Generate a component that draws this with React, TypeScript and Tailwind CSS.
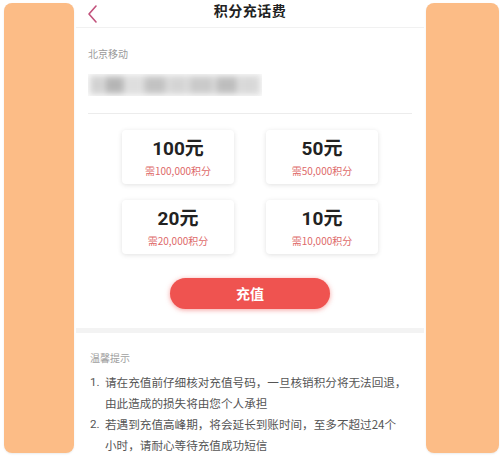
const options = [
  { amount: "100元", cost: "需100,000积分" },
  { amount: "50元", cost: "需50,000积分" },
  { amount: "20元", cost: "需20,000积分" },
  { amount: "10元", cost: "需10,000积分" },
];

export default function App() {
  return (
    <div
      className="flex h-[456px] w-[500px] overflow-hidden bg-white"
      style={{ fontFamily: '"Noto Sans CJK SC", "Noto Sans", sans-serif' }}
    >
      {/* left side panel */}
      <div className="ml-[4px] mt-[3px] h-[450px] w-[70px] rounded-lg bg-[#fcbc86] shadow-[0_1px_2px_rgba(0,0,0,0.08)]" />

      {/* phone screen */}
      <div className="ml-[2px] flex w-[348px] flex-col bg-white">
        {/* header */}
        <div className="relative flex h-[33px] items-center justify-center border-b border-[#f1f1f1]">
          <svg
            className="absolute left-[10px] top-[4px]"
            width="12"
            height="20"
            viewBox="0 0 12 20"
            fill="none"
          >
            <path d="M10 2 L3 10 L10 18" stroke="#c2527c" strokeWidth="1.6" strokeLinecap="round" strokeLinejoin="round" />
          </svg>
          <h1 className="mb-[6px] text-[14px] font-bold tracking-[0.5px] text-[#222]">积分充话费</h1>
        </div>

        {/* account */}
        <div className="px-[12px]">
          <div className="pt-[19px] text-[10px] leading-[14px] text-[#9a9a9a]">北京移动</div>
          <div className="mt-[13px] h-[22px] w-[174px] overflow-hidden">
            <div className="flex h-full items-center gap-[3px] bg-[#e6e6e6] px-[4px] blur-[3px]">
              <div className="h-[16px] w-[10px] bg-[#cfcfcf]" />
              <div className="h-[16px] w-[20px] bg-[#b5b5b5]" />
              <div className="h-[16px] w-[14px] bg-[#dedede]" />
              <div className="h-[16px] w-[22px] bg-[#c2c2c2]" />
              <div className="h-[16px] w-[18px] bg-[#d4d4d4]" />
              <div className="h-[16px] w-[24px] bg-[#cacaca]" />
              <div className="h-[16px] w-[22px] bg-[#bdbdbd]" />
              <div className="h-[16px] w-[18px] bg-[#d8d8d8]" />
            </div>
          </div>
          <div className="mt-[17px] border-b border-[#ececec]" />
        </div>

        {/* options */}
        <div className="mt-[16px] grid grid-cols-[112px_112px] justify-center gap-x-[32px] gap-y-[16px]">
          {options.map((o) => (
            <div
              key={o.amount}
              className="flex h-[54px] flex-col items-center justify-center rounded-[4px] bg-white shadow-[0_1px_5px_rgba(0,0,0,0.12)]"
            >
              <div
                className="text-[19px] font-bold leading-[24px] text-[#222]"
                style={{ fontFamily: 'Roboto, "Noto Sans CJK SC", sans-serif' }}
              >
                {o.amount}
              </div>
              <div className="mt-[3px] text-[10px] leading-[13px] text-[#de6a6a]">{o.cost}</div>
            </div>
          ))}
        </div>

        {/* submit */}
        <div className="mt-[24px] flex justify-center">
          <button className="h-[31px] w-[160px] rounded-full bg-[#ef5350] text-[14px] font-bold text-white shadow-[0_1px_5px_rgba(239,83,80,0.55)]">
            充值
          </button>
        </div>

        <div className="mt-[19px] h-[8px] bg-[#f3f3f3]" />

        {/* tips */}
        <div className="pl-[14px] pr-[14px] pt-[18px]">
          <div className="text-[10px] leading-[14px] text-[#a0a0a0]">温馨提示</div>
          <ol className="mt-[7px] text-[11.6px] leading-[21px] text-[#555]">
            <li className="flex">
              <span className="w-[15px] shrink-0" style={{ fontFamily: "Roboto, sans-serif" }}>1.</span>
              <span>请在充值前仔细核对充值号码，一旦核销积分将无法回退，由此造成的损失将由您个人承担</span>
            </li>
            <li className="flex">
              <span className="w-[15px] shrink-0" style={{ fontFamily: "Roboto, sans-serif" }}>2.</span>
              <span>
                若遇到充值高峰期，将会延长到账时间，至多不超过24个<span className="whitespace-nowrap">小时</span>，请耐心等待充值成功短信
              </span>
            </li>
          </ol>
        </div>
      </div>

      {/* right side panel */}
      <div className="ml-[2px] mt-[3px] h-[450px] w-[73px] rounded-lg bg-[#fcbc86] shadow-[0_1px_2px_rgba(0,0,0,0.08)]" />
    </div>
  );
}
